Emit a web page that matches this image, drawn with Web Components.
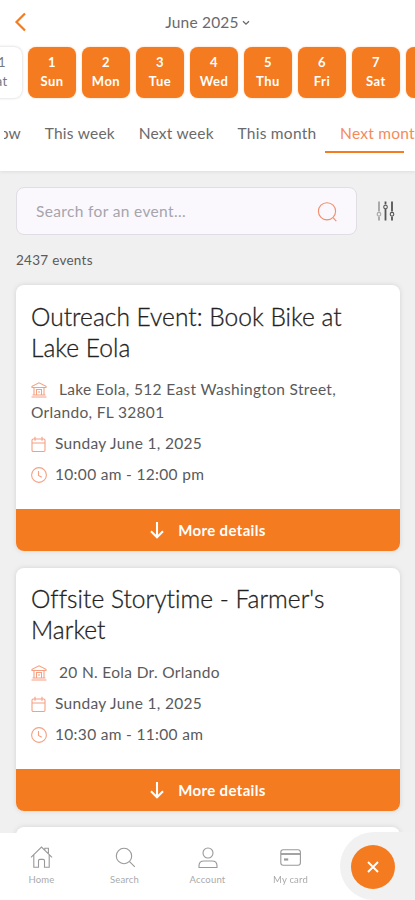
<!DOCTYPE html>
<html lang="en">
<head>
<meta charset="utf-8">
<meta name="viewport" content="width=device-width, initial-scale=1">
<title>Events</title>
<style>
  body {
    margin: 0;
    height: 100vh;
    overflow: hidden;
    background: #f0f0f0;
    color: #5a5a5a;
    font-family: Lato, "Open Sans", sans-serif;
    --orange: #f47b20;
    --salmon: #f5a083;
  }
</style>
</head>
<body>
<events-app></events-app>

<script>
function define(name, html, setup) {
  const template = document.createElement('template');
  template.innerHTML = html;
  customElements.define(name, class extends HTMLElement {
    constructor() {
      super();
      this.attachShadow({ mode: 'open' });
      this.shadowRoot.appendChild(template.content.cloneNode(true));
    }
    connectedCallback() {
      if (setup) setup(this, this.shadowRoot);
    }
  });
}

const icons = {
  back: '<path d="M10 1.5 1.5 10l8.5 8.5" stroke-width="2.2"/>',
  chevron: '<path d="m1 1.2 3 3 3-3" stroke-width="1.3"/>',
  search: '<circle cx="9" cy="9.3" r="8.6"/><path d="m15.3 15.8 3 3.3"/>',
  sliders: '<g stroke="#aaa" stroke-width="2"><path d="M3 .5v10M3 15.5v4"/><circle cx="3" cy="13.2" r="1.8" stroke-width="1.2"/></g><path d="M9.5 .5v3M9.5 8v11.5M16 .5v10M16 15.5v4" stroke-width="1.8"/><circle cx="9.5" cy="6" r="1.8"/><circle cx="16" cy="13.2" r="1.8"/>',
  place: '<path d="M1 5.5V4.3L8 .8l7 3.5v1.2zM3 5.5V13M13 5.5V13M5.5 13V7.5h5V13M8 9v2M1.5 13h13M.5 15h15"/>',
  date: '<rect x="1" y="3" width="13" height="12.5" rx="1.2"/><path d="M1 7h13M4 .7v4M11 .7v4"/>',
  time: '<circle cx="8" cy="8" r="7.4"/><path d="M7.5 4v4.4l3.3 1.8"/>',
  down: '<path d="M7 0v15.3M1 9.3l6 6 6-6" stroke-width="2.1"/>',
  home: '<path d="M1 11.3 11.5 1 22 11.3M14.8 3.9V2.2h3.6v5M3.8 9v12.2h4.7v-6.4q0-1.4 1.4-1.4h3.2q1.4 0 1.4 1.4v6.4h4.7V9"/>',
  find: '<circle cx="9" cy="9" r="7.7"/><path d="m14.6 14.6 5.2 5.2"/>',
  account: '<circle cx="10" cy="6" r="5"/><path d="M1 20.5v-1.7q0-4.8 5-4.8h8q5 0 5 4.8v1.7z"/>',
  card: '<rect x=".8" y=".8" width="19.6" height="15.4" rx="2.4"/><path d="M1 5h19.4" stroke-width="1.8"/><path d="M4 10.5h4.2" stroke-width="2.2"/>',
  close: '<path d="m1 1 10 10M11 1 1 11" stroke-width="1.9"/>'
};

// <ui-icon name w h>: stroked in the current colour
define('ui-icon', `
  <style>
    :host { display: inline-block; flex: none; line-height: 0; }
    svg { display: block; fill: none; stroke: currentColor; stroke-width: 1.1; overflow: visible; }
  </style>
  <svg></svg>
`, (el, root) => {
  const svg = root.querySelector('svg');
  svg.setAttribute('width', el.getAttribute('w'));
  svg.setAttribute('height', el.getAttribute('h'));
  svg.innerHTML = icons[el.getAttribute('name')];
});

define('day-tile', `
  <style>
    :host {
      display: flex;
      flex: none;
      flex-direction: column;
      box-sizing: border-box;
      width: 48px;
      height: 51px;
      padding-top: 6px;
      border-radius: 8px;
      background: var(--orange);
      color: #fff;
      text-align: center;
      font-size: 13px;
      font-weight: 700;
      line-height: 19px;
      letter-spacing: .5px;
      box-shadow: 0 0 2px #fbc49b;
    }
    :host([off]) {
      background: #fff;
      color: #777;
      font-weight: 400;
      box-shadow: 0 0 3px #ccc;
    }
  </style>
  <span><slot name="num"></slot></span>
  <span><slot></slot></span>
`);

define('range-tab', `
  <style>
    :host {
      display: block;
      flex: none;
      font-size: 15.5px;
      line-height: 20px;
      letter-spacing: .25px;
      padding-bottom: 8px;
      border-bottom: 2px solid transparent;
      white-space: nowrap;
      color: #6a6a6a;
    }
    :host([active]) { color: #f58a5c; }
  </style>
  <slot></slot>
`);

define('app-header', `
  <style>
    :host {
      display: block;
      height: 171px;
      background: #fff;
      box-shadow: 0 1px 3px #ddd;
      overflow: hidden;
    }
    .top {
      display: grid;
      grid-template-columns: 40px 1fr 40px;
      align-items: center;
      height: 44px;
      box-sizing: border-box;
    }
    .back { color: var(--orange); padding-left: 15px; }
    .month {
      display: flex;
      align-items: center;
      justify-content: center;
      gap: 3px;
      font-size: 15.5px;
      letter-spacing: .2px;
      color: #6a6a6a;
    }
    .days {
      display: flex;
      gap: 6px;
      margin: 3px 0 0 -26px;
    }
    .tabs {
      display: flex;
      gap: 23.7px;
      margin: 25px 0 0 4px;
    }
    .tabs .past { width: 17px; display: flex; justify-content: flex-end; overflow: hidden; }
    .line { width: 79px; height: 2px; margin: -2px 0 0 325px; background: var(--orange); }
  </style>
  <div class="top">
    <ui-icon class="back" name="back" w="12" h="20"></ui-icon>
    <div class="month"><span>June 2025</span><ui-icon name="chevron" w="8" h="5"></ui-icon></div>
  </div>
  <div class="days">
    <day-tile off><span slot="num">31</span>Sat</day-tile>
    <day-tile><span slot="num">1</span>Sun</day-tile>
    <day-tile><span slot="num">2</span>Mon</day-tile>
    <day-tile><span slot="num">3</span>Tue</day-tile>
    <day-tile><span slot="num">4</span>Wed</day-tile>
    <day-tile><span slot="num">5</span>Thu</day-tile>
    <day-tile><span slot="num">6</span>Fri</day-tile>
    <day-tile><span slot="num">7</span>Sat</day-tile>
    <day-tile></day-tile>
  </div>
  <div class="tabs">
    <range-tab class="past">ow</range-tab>
    <range-tab>This week</range-tab>
    <range-tab>Next week</range-tab>
    <range-tab>This month</range-tab>
    <range-tab active>Next month</range-tab>
  </div>
  <div class="line"></div>
`);

define('event-search', `
  <style>
    :host { display: block; padding: 16px 16px 0; }
    .row { display: flex; align-items: center; }
    .box {
      display: flex;
      align-items: center;
      justify-content: space-between;
      box-sizing: border-box;
      width: 341px;
      height: 48px;
      padding: 0 19px;
      border: 1px solid #e0dde4;
      border-radius: 8px;
      background: #faf8fc;
      color: #a6a4ad;
      font-size: 15.5px;
      letter-spacing: .35px;
    }
    .box ui-icon { color: #f28c6c; }
    .filter { margin-left: 19px; color: #555; }
    .count { margin-top: 16px; font-size: 13.5px; line-height: 18px; letter-spacing: .27px; }
  </style>
  <div class="row">
    <div class="box"><span>Search for an event...</span><ui-icon name="search" w="19" h="19"></ui-icon></div>
    <ui-icon class="filter" name="sliders" w="19" h="20"></ui-icon>
  </div>
  <div class="count"><slot></slot></div>
`);

define('event-card', `
  <style>
    :host {
      display: block;
      margin: 0 15px 16.5px 16px;
      border-radius: 8px;
      background: #fff;
      box-shadow: 0 0 5px #d2d2d2;
      overflow: hidden;
    }
    .body { padding: 15.5px 16px 23px 15px; }
    h2 {
      margin: 0 0 15.5px;
      font-size: 24.5px;
      font-weight: 300;
      line-height: 31px;
      letter-spacing: .03px;
      color: #222;
      -webkit-text-stroke: .3px #222;
    }
    p {
      margin: 0 0 8px;
      font-size: 15.5px;
      line-height: 23px;
      letter-spacing: .32px;
    }
    p ui-icon { color: var(--salmon); vertical-align: -3px; margin-right: 8px; }
    p .place { margin-right: 12px; }
    .more {
      display: flex;
      align-items: center;
      justify-content: center;
      gap: 14px;
      height: 42px;
      background: var(--orange);
      color: #fff;
      font-size: 15px;
      font-weight: 700;
      letter-spacing: .35px;
    }
  </style>
  <div class="body">
    <h2><slot name="title"></slot></h2>
    <p><ui-icon class="place" name="place" w="16" h="16"></ui-icon><slot name="place"></slot></p>
    <p><ui-icon name="date" w="16" h="16"></ui-icon><slot name="date"></slot></p>
    <p style="margin: 0"><ui-icon name="time" w="16" h="16"></ui-icon><slot name="time"></slot></p>
  </div>
  <div class="more"><ui-icon name="down" w="14" h="16"></ui-icon><span>More details</span></div>
`);

define('nav-item', `
  <style>
    :host {
      display: flex;
      flex-direction: column;
      align-items: center;
      width: 83px;
      padding-top: 13px;
      color: #999;
      font-size: 9.5px;
      line-height: 12px;
      letter-spacing: .2px;
    }
    .icon { display: flex; align-items: center; height: 22px; margin-bottom: 6px; }
    .label { color: #aaa; }
  </style>
  <div class="icon"><slot name="icon"></slot></div>
  <div class="label"><slot></slot></div>
`);

// Fixed bar along the bottom, over the scrolling list
define('bottom-nav', `
  <style>
    :host {
      position: fixed;
      left: 0;
      right: 0;
      bottom: 0;
      display: flex;
      height: 67px;
      background: #fff;
    }
    .dock {
      display: flex;
      align-items: center;
      box-sizing: border-box;
      width: 75px;
      height: 68px;
      margin: -1px 0 0 auto;
      padding: 2px 0 0 11px;
      border-radius: 34px 0 0 34px;
      background: #f1f1f1;
    }
    .close {
      display: flex;
      align-items: center;
      justify-content: center;
      width: 44px;
      height: 44px;
      border-radius: 50%;
      background: var(--orange);
      color: #fff;
    }
  </style>
  <slot></slot>
  <div class="dock"><div class="close"><ui-icon name="close" w="12" h="12"></ui-icon></div></div>
`);

define('events-app', `
  <style>
    :host { display: block; height: 100vh; overflow: hidden; }
    .list { margin-top: 16px; }
  </style>
  <app-header></app-header>
  <event-search>2437 events</event-search>
  <div class="list">
    <event-card>
      <span slot="title">Outreach Event: Book Bike at Lake Eola</span>
      <span slot="place">Lake Eola, 512 East Washington Street, Orlando, FL 32801</span>
      <span slot="date">Sunday June 1, 2025</span>
      <span slot="time">10:00 am - 12:00 pm</span>
    </event-card>
    <event-card>
      <span slot="title">Offsite Storytime - Farmer's Market</span>
      <span slot="place">20 N. Eola Dr. Orlando</span>
      <span slot="date">Sunday June 1, 2025</span>
      <span slot="time">10:30 am - 11:00 am</span>
    </event-card>
    <event-card></event-card>
  </div>
  <bottom-nav>
    <nav-item><ui-icon slot="icon" name="home" w="23" h="22"></ui-icon>Home</nav-item>
    <nav-item><ui-icon slot="icon" name="find" w="20" h="20"></ui-icon>Search</nav-item>
    <nav-item><ui-icon slot="icon" name="account" w="20" h="21"></ui-icon>Account</nav-item>
    <nav-item><ui-icon slot="icon" name="card" w="21" h="17"></ui-icon>My card</nav-item>
  </bottom-nav>
`);
</script>
</body>
</html>
